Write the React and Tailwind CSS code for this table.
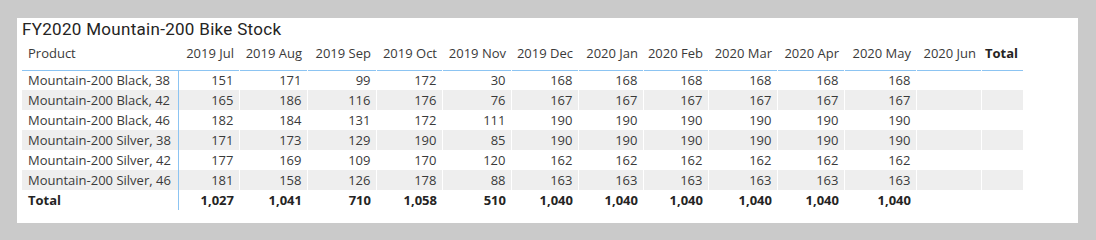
import React from "react";

const months = [
  ["2019 Jul", 61],
  ["2019 Aug", 68],
  ["2019 Sep", 69],
  ["2019 Oct", 66],
  ["2019 Nov", 69],
  ["2019 Dec", 67],
  ["2020 Jan", 65],
  ["2020 Feb", 65],
  ["2020 Mar", 69],
  ["2020 Apr", 67],
  ["2020 May", 72],
  ["2020 Jun", 65],
];

const rows = [
  ["Mountain-200 Black, 38", [151, 171, 99, 172, 30, 168, 168, 168, 168, 168, 168]],
  ["Mountain-200 Black, 42", [165, 186, 116, 176, 76, 167, 167, 167, 167, 167, 167]],
  ["Mountain-200 Black, 46", [182, 184, 131, 172, 111, 190, 190, 190, 190, 190, 190]],
  ["Mountain-200 Silver, 38", [171, 173, 129, 190, 85, 190, 190, 190, 190, 190, 190]],
  ["Mountain-200 Silver, 42", [177, 169, 109, 170, 120, 162, 162, 162, 162, 162, 162]],
  ["Mountain-200 Silver, 46", [181, 158, 126, 178, 88, 163, 163, 163, 163, 163, 163]],
];

const totals = ["1,027", "1,041", "710", "1,058", "510", "1,040", "1,040", "1,040", "1,040", "1,040", "1,040"];

export default function App() {
  return (
    <div className="w-[1096px] h-[240px] bg-[#cacaca] pt-[18px] pl-[17px]" style={{ fontFamily: "'Open Sans', sans-serif" }}>
      <div className="w-[1061px] h-[205px] bg-white pl-[5px]">
        <div className="h-[22px] pt-[1px] text-[17px] leading-[20px] text-[#252423] tracking-[0.3px]" style={{ fontFamily: "Roboto, sans-serif" }}>
          FY2020 Mountain-200 Bike Stock
        </div>
        <table className="table-fixed border-collapse text-[13px] leading-[18px] text-[#3a3a3a]">
          <colgroup>
            <col className="w-[156px]" />
            {months.map(([m, w]) => (
              <col key={m} style={{ width: w }} />
            ))}
            <col className="w-[42px]" />
          </colgroup>
          <thead>
            <tr className="h-[30px] border-b border-[#8cc4f2]">
              <th className="text-left font-normal pl-[6px] pb-[8px] align-bottom">Product</th>
              {months.map(([m]) => (
                <th key={m} className="text-right font-normal pr-[5px] pb-[8px] align-bottom whitespace-nowrap">
                  {m}
                </th>
              ))}
              <th className="text-left font-bold text-[#252423] pl-[4px] pb-[8px] align-bottom">Total</th>
            </tr>
          </thead>
          <tbody>
            {rows.map(([name, vals], i) => (
              <tr key={name} className={i % 2 === 1 ? "h-[20px] bg-[#eeeeee]" : "h-[20px]"}>
                <td className="pl-[6px] whitespace-nowrap border-r border-[#8cc4f2]">{name}</td>
                {months.map(([m], j) => (
                  <td key={m} className="text-right pr-[5px] border-l border-white">
                    {vals[j]}
                  </td>
                ))}
                <td className="border-l border-white" />
              </tr>
            ))}
            <tr className="h-[20px] font-bold text-[#252423]">
              <td className="pl-[6px] border-r border-[#8cc4f2]">Total</td>
              {months.map(([m], j) => (
                <td key={m} className="text-right pr-[5px]">
                  {totals[j]}
                </td>
              ))}
              <td />
            </tr>
          </tbody>
        </table>
      </div>
    </div>
  );
}
